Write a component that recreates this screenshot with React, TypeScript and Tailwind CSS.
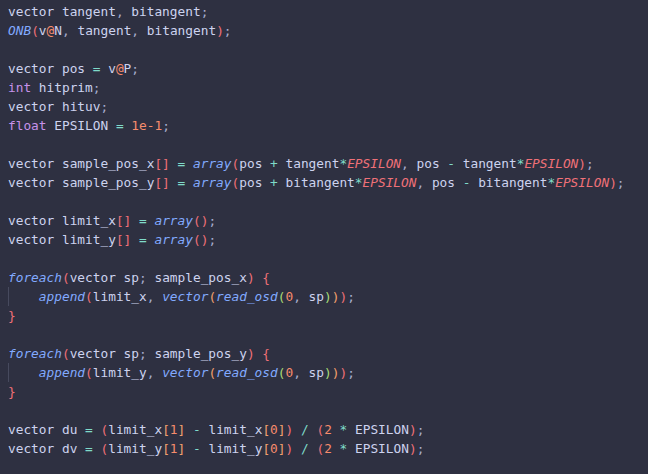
const plain = "text-[#cdd3ef]";
const punc = "text-[#a6accd]";
const kw = "text-[#c792ea]";
const fn = "italic text-[#82aaff]";
const op = "text-[#7fdbca]";
const num = "text-[#f78c6c]";
const b1 = "text-[#f07178]";
const b2 = "text-[#f2a06e]";
const b3 = "text-[#a9dc76]";
const cst = "italic text-[#f07178]";

type Tok = [string, string];
type Line = { indent?: boolean; toks: Tok[] };

const sampleLine = (name: string, axis: string): Line => ({
  toks: [
    ["vector ", plain],
    [name, plain],
    ["[]", b1],
    [" ", plain],
    ["=", op],
    [" ", plain],
    ["array", fn],
    ["(", b1],
    ["pos ", plain],
    ["+", op],
    [" " + axis, plain],
    ["*", op],
    ["EPSILON", cst],
    [",", punc],
    [" pos ", plain],
    ["-", op],
    [" " + axis, plain],
    ["*", op],
    ["EPSILON", cst],
    [")", b1],
    [";", punc],
  ],
});

const limitLine = (name: string): Line => ({
  toks: [
    ["vector ", plain],
    [name, plain],
    ["[]", b1],
    [" ", plain],
    ["=", op],
    [" ", plain],
    ["array", fn],
    ["()", b1],
    [";", punc],
  ],
});

const foreachBlock = (src: string, dst: string): Line[] => [
  {
    toks: [
      ["foreach", fn],
      ["(", b1],
      ["vector sp", plain],
      [";", punc],
      [" " + src, plain],
      [")", b1],
      [" ", plain],
      ["{", b1],
    ],
  },
  {
    indent: true,
    toks: [
      ["append", fn],
      ["(", b1],
      [dst, plain],
      [",", punc],
      [" ", plain],
      ["vector", fn],
      ["(", b2],
      ["read_osd", fn],
      ["(", b3],
      ["0", num],
      [",", punc],
      [" sp", plain],
      [")", b3],
      [")", b2],
      [")", b1],
      [";", punc],
    ],
  },
  { toks: [["}", b1]] },
];

const derivLine = (name: string, lim: string): Line => ({
  toks: [
    ["vector " + name + " ", plain],
    ["=", op],
    [" ", plain],
    ["(", b1],
    [lim, plain],
    ["[", b2],
    ["1", num],
    ["]", b2],
    [" ", plain],
    ["-", op],
    [" " + lim, plain],
    ["[", b2],
    ["0", num],
    ["]", b2],
    [")", b1],
    [" ", plain],
    ["/", op],
    [" ", plain],
    ["(", b1],
    ["2", num],
    [" ", plain],
    ["*", op],
    [" EPSILON", plain],
    [")", b1],
    [";", punc],
  ],
});

const blank: Line = { toks: [] };

const lines: Line[] = [
  { toks: [["vector tangent", plain], [",", punc], [" bitangent", plain], [";", punc]] },
  {
    toks: [
      ["ONB", fn],
      ["(", b1],
      ["v", plain],
      ["@", num],
      ["N", plain],
      [",", punc],
      [" tangent", plain],
      [",", punc],
      [" bitangent", plain],
      [")", b1],
      [";", punc],
    ],
  },
  blank,
  { toks: [["vector pos ", plain], ["=", op], [" v", plain], ["@", num], ["P", plain], [";", punc]] },
  { toks: [["int", kw], [" hitprim", plain], [";", punc]] },
  { toks: [["vector hituv", plain], [";", punc]] },
  { toks: [["float", kw], [" EPSILON ", plain], ["=", op], [" ", plain], ["1e-1", num], [";", punc]] },
  blank,
  sampleLine("sample_pos_x", "tangent"),
  sampleLine("sample_pos_y", "bitangent"),
  blank,
  limitLine("limit_x"),
  limitLine("limit_y"),
  blank,
  ...foreachBlock("sample_pos_x", "limit_x"),
  blank,
  ...foreachBlock("sample_pos_y", "limit_y"),
  blank,
  derivLine("du", "limit_x"),
  derivLine("dv", "limit_y"),
];

export default function App() {
  return (
    <div className="w-[648px] h-[474px] bg-[#2e3041] overflow-hidden px-2 pt-[2px] font-['DejaVu_Sans_Mono',monospace] text-[12.8px] leading-[19px]">
      {lines.map((line, i) => (
        <div key={i} className="h-[19px] whitespace-pre">
          {line.indent && (
            <span className="inline-block w-[4ch] h-[19px] align-top border-l border-[#474a5e]" />
          )}
          {line.toks.map(([text, cls], j) => (
            <span key={j} className={cls}>
              {text}
            </span>
          ))}
        </div>
      ))}
    </div>
  );
}
